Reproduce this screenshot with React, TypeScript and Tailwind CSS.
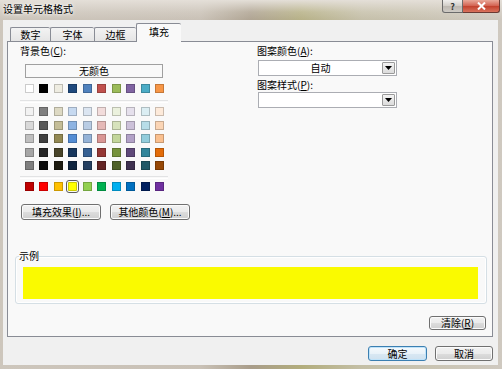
import React from 'react';

const FONT = "font-['Noto_Sans_CJK_SC','Noto_Sans',sans-serif]";

const themeRow = ['#ffffff', '#000000', '#eeece1', '#1f497d', '#4f81bd', '#c0504d', '#9bbb59', '#8064a2', '#4bacc6', '#f79646'];

const shadeRows = [
  ['#f2f2f2', '#7f7f7f', '#ddd9c3', '#c6d9f0', '#dbe5f1', '#f2dcdb', '#ebf1dd', '#e5e0ec', '#dbeef3', '#fdeada'],
  ['#d9d9d9', '#595959', '#c4bd97', '#8db3e2', '#b8cce4', '#e5b9b7', '#d7e3bc', '#ccc1d9', '#b7dde8', '#fbd5b5'],
  ['#bfbfbf', '#3f3f3f', '#938953', '#548dd4', '#95b3d7', '#d99694', '#c3d69b', '#b2a2c7', '#92cddc', '#fac08f'],
  ['#a6a6a6', '#262626', '#494429', '#17365d', '#366092', '#953734', '#76923c', '#5f497a', '#31859b', '#e36c09'],
  ['#808080', '#0c0c0c', '#1d1b10', '#0f243e', '#244061', '#632423', '#4f6128', '#3f3151', '#205867', '#974806'],
];

const standardRow = ['#c00000', '#ff0000', '#ffc000', '#ffff00', '#92d050', '#00b050', '#00b0f0', '#0070c0', '#002060', '#7030a0'];

function Swatch({ color, selected }: { color: string; selected?: boolean }) {
  return (
    <div
      className={
        'w-[9px] h-[9px] border border-[rgba(0,0,0,0.2)] ' +
        (selected ? 'outline outline-1 outline-[#5c5c5c] outline-offset-[1px] rounded-[1px]' : '')
      }
      style={{ backgroundColor: color }}
    />
  );
}

function SwatchRow({ colors, selectedIndex }: { colors: string[]; selectedIndex?: number }) {
  return (
    <div className="flex gap-x-[5.45px]">
      {colors.map((c, i) => (
        <Swatch key={i} color={c} selected={i === selectedIndex} />
      ))}
    </div>
  );
}

function Separator() {
  return <div className="w-[148px] h-[2px] border-t border-[#e2e3e4] bg-white/0 shadow-[0_1px_0_#ffffff]" />;
}

function Button({ children, className = '', primary = false }: { children: React.ReactNode; className?: string; primary?: boolean }) {
  return (
    <div
      className={
        'flex items-center justify-center rounded-[3px] border text-[10px] leading-none text-black ' +
        (primary
          ? 'border-[#3c7fb1] bg-[linear-gradient(#f6fafd_0%,#e9f2f9_50%,#d9e8f3_51%,#cfe1ef_100%)] shadow-[inset_0_0_0_1px_#bfe3fa] '
          : 'border-[#707070] bg-[linear-gradient(#f2f2f2_0%,#ebebeb_50%,#dddddd_51%,#cfcfcf_100%)] shadow-[inset_0_0_0_1px_#fbfbfb] ') +
        className
      }
    >
      {children}
    </div>
  );
}

function Dropdown({ value }: { value: string }) {
  return (
    <div className="ml-[1px] w-[139px] h-[16px] flex border border-[#abadb3] bg-white">
      <div className="flex-1 flex items-center justify-center text-[10px] leading-none">{value}</div>
      <div className="w-[13px] my-[1px] mr-[1px] border border-[#9a9a9a] rounded-[1px] bg-[linear-gradient(#f3f3f3,#dcdcdc)] flex items-center justify-center">
        <svg width="7" height="4" viewBox="0 0 7 4">
          <path d="M0 0h7L3.5 4z" fill="#000" />
        </svg>
      </div>
    </div>
  );
}

function Tab({ label, w, active = false }: { label: string; w: string; active?: boolean }) {
  return (
    <div
      className={
        'flex items-center justify-center border border-[#898c95] border-r-0 rounded-t-[2px] text-[10px] leading-none ' +
        w +
        (active
          ? ' h-[19px] bg-[#f9f9f9] border-r border-b-0 relative z-10 -mb-[1px] pb-[2px]'
          : ' h-[14px] mt-[4px] bg-[linear-gradient(#f3f3f3,#e5e5e5)] border-b-0')
      }
    >
      {label}
    </div>
  );
}

function Accel({ k }: { k: string }) {
  return (
    <span>
      (<span className="underline underline-offset-1">{k}</span>)
    </span>
  );
}

export default function App() {
  return (
    <div
      className={
        'w-[502px] h-[369px] flex flex-col overflow-hidden text-black bg-[linear-gradient(90deg,#cdc6bc_0%,#c9c1b6_40%,#a99d8a_50%,#b2ad7c_60%,#c4bfa6_72%,#cfc9c0_100%)] ' +
        FONT
      }
    >
      {/* title bar */}
      <div className="h-[20px] flex items-start justify-between bg-[linear-gradient(#e4dfd8_0%,rgba(228,223,216,0.3)_60%,rgba(200,192,182,0.2)_100%)]">
        <div className="pl-[3px] pt-[3px] text-[10px] leading-[12px] [text-shadow:0_0_5px_#fff,0_0_3px_#fff]">设置单元格格式</div>
        <div className="flex mr-[2px]">
          <div className="w-[21px] h-[13px] flex items-center justify-center rounded-bl-[3px] border border-t-0 border-[#6b6b6b] bg-[linear-gradient(#f0efed,#d1cdc7_50%,#bdb8b1_51%,#cfcbc5)] text-[9px] leading-none text-[#333] font-bold">
            ?
          </div>
          <div className="w-[37px] h-[13px] flex items-center justify-center rounded-br-[3px] border border-t-0 border-l-0 border-[#6b3a33] bg-[linear-gradient(#e9a99a,#d2604f_50%,#c2402c_51%,#d9725d)]">
            <svg width="9" height="8" viewBox="0 0 9 8">
              <path d="M1 0.5L8 7.5M8 0.5L1 7.5" stroke="#fff" strokeWidth="2" />
            </svg>
          </div>
        </div>
      </div>

      {/* client area */}
      <div className="mx-[3px] mr-[4px] h-[345px] bg-[#f0f0f0] flex flex-col pl-[4px] pt-[3px]">
        {/* tabs */}
        <div className="flex items-start ml-[3px] h-[18px]">
          <Tab label="数字" w="w-[40px]" />
          <Tab label="字体" w="w-[44px]" />
          <Tab label="边框" w="w-[42px]" />
          <Tab label="填充" w="w-[45px]" active />
        </div>

        {/* tab panel */}
        <div className="w-[486px] h-[296px] border border-[#898c95] bg-[#f9f9f9] flex flex-col">
          <div className="h-[179px] pt-[3px] flex">
            {/* left column */}
            <div className="w-[249px] pl-[12px] flex flex-col">
              <div className="text-[10px] leading-[12px]">
                背景色<Accel k="C" />:
              </div>
              <div className="mt-[7px] ml-[5px] w-[138px] h-[14px] border border-[#a0a0a0] bg-[#f9f9f9] flex items-center justify-center text-[10px] leading-none">
                无颜色
              </div>
              <div className="ml-[5px] mt-[6px]">
                <SwatchRow colors={themeRow} />
              </div>
              <div className="mt-[7px]">
                <Separator />
              </div>
              <div className="ml-[5px] mt-[5px] flex flex-col gap-y-[4.5px]">
                {shadeRows.map((r, i) => (
                  <SwatchRow key={i} colors={r} />
                ))}
              </div>
              <div className="mt-[6px]">
                <Separator />
              </div>
              <div className="ml-[5px] mt-[4px]">
                <SwatchRow colors={standardRow} selectedIndex={3} />
              </div>
              <div className="mt-[13px] ml-[1px] flex gap-[9px]">
                <Button className="w-[80px] h-[16px]">
                  填充效果<Accel k="I" />...
                </Button>
                <Button className="w-[80px] h-[16px]">
                  其他颜色<Accel k="M" />...
                </Button>
              </div>
            </div>

            {/* right column */}
            <div className="flex flex-col">
              <div className="text-[10px] leading-[12px]">
                图案颜色<Accel k="A" />:
              </div>
              <div className="mt-[3px]">
                <Dropdown value="自动" />
              </div>
              <div className="mt-[3px] text-[10px] leading-[12px]">
                图案样式<Accel k="P" />:
              </div>
              <div className="mt-[1px]">
                <Dropdown value="" />
              </div>
            </div>
          </div>

          {/* sample */}
          <fieldset className="mt-[29px] ml-[7px] w-[472px] border border-[#d5dfe5] rounded-[3px] shadow-[inset_0_0_0_1px_#ffffff] px-[7px] pt-[5px] pb-[4px]">
            <legend className="ml-[-4px] px-0 text-[10px] leading-[12px]">示例</legend>
            <div className="w-[455px] h-[32px] bg-[#fafa00]" />
          </fieldset>

          <div className="mt-[12px] mr-[6px] self-end">
            <Button className="w-[57px] h-[14px]">
              清除<Accel k="R" />
            </Button>
          </div>
        </div>

        {/* dialog buttons */}
        <div className="mt-[9px] mr-[5px] flex justify-end gap-[8px]">
          <Button primary className="w-[59px] h-[15px]">
            确定
          </Button>
          <Button className="w-[58px] h-[15px]">取消</Button>
        </div>
      </div>
    </div>
  );
}
